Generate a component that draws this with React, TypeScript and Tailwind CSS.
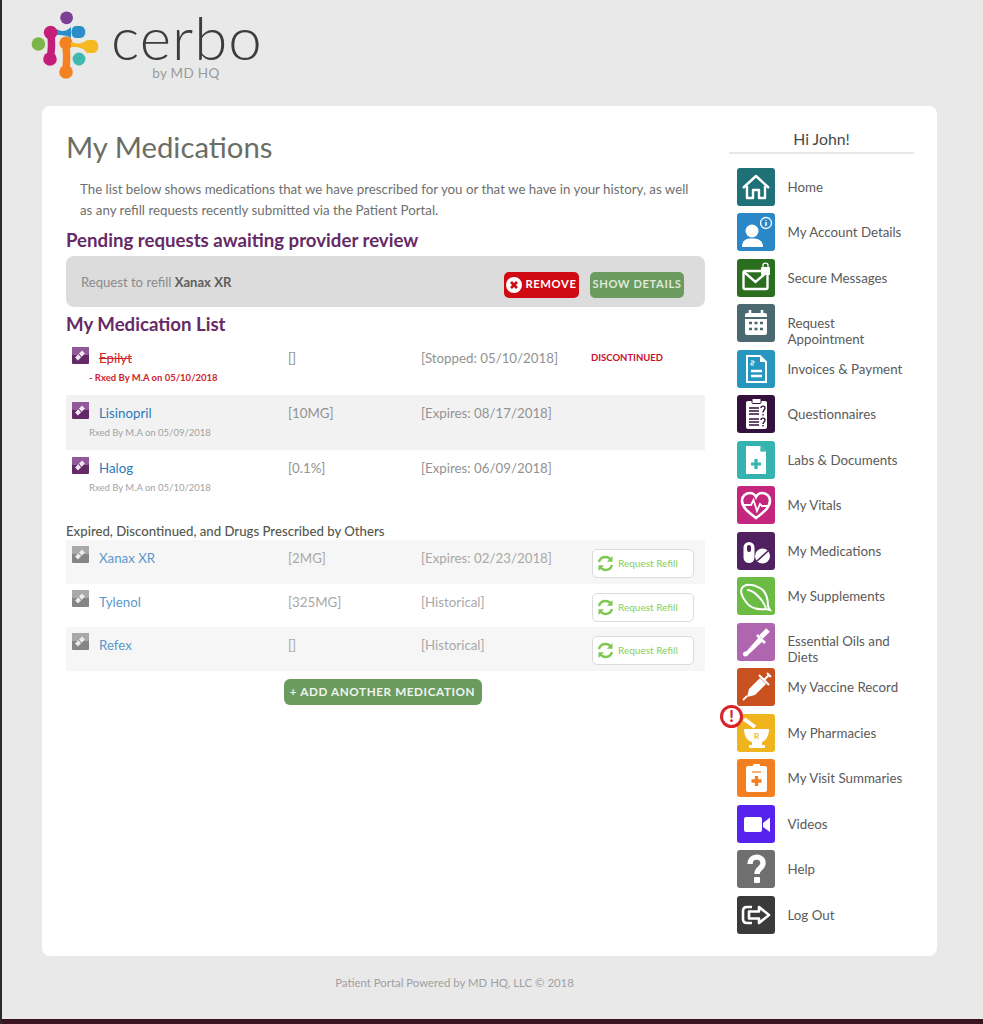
import type { FC, ReactNode } from 'react';

const lato = 'font-["Lato","Noto_Sans",sans-serif]';

const Logo: FC = () => (
  <svg width="72" height="72" viewBox="0 0 72 72" className="shrink-0">
    <circle cx="36.6" cy="8.8" r="6.4" fill="#7b3f98" />
    <circle cx="8.4" cy="35" r="6.8" fill="#7ab648" />
    <circle cx="49" cy="50" r="6.4" fill="#3fb8af" />
    <path d="M26 20 C32 23 36 23 41 18 L41 29 C36 26 32 26 26 26 Z" fill="#2a8fc9" />
    <path d="M46 17 H50 C57 17 57 29 50 29 H46 C40 29 40 17 46 17 Z" fill="#2a8fc9" />
    <path d="M20.5 24 C22 32 22 40 20 50" stroke="#c41f78" strokeWidth="7.5" fill="none" />
    <circle cx="20.6" cy="23.5" r="6.8" fill="#c41f78" />
    <circle cx="20" cy="50" r="6.8" fill="#c41f78" />
    <path d="M36 34 C37 44 37 52 36 63" stroke="#f58220" strokeWidth="7.5" fill="none" />
    <circle cx="36" cy="34" r="6.6" fill="#f58220" />
    <circle cx="36" cy="63" r="6.8" fill="#f58220" />
    <path d="M41 33 C47 35 51 35 56 32 L56 42 C51 38 47 38 41 38 Z" fill="#f5b921" />
    <path d="M58 31 H63 C70 31 70 44 63 44 H58 C53 44 53 31 58 31 Z" fill="#f5b921" />
  </svg>
);

const RxIcon: FC<{ grey?: boolean }> = ({ grey }) => (
  <svg width="17" height="17" viewBox="0 0 17 17" className="shrink-0">
    <rect width="17" height="17" rx="1" fill={grey ? '#858585' : '#642a68'} />
    <rect width="17" height="8" rx="1" fill={grey ? '#a9a9a9' : '#91589a'} />
    <path d="M4.5 12 L11.5 5" stroke="#f1e6f1" strokeWidth="4" />
    <path d="M6.5 6.5 L9.5 10.5" stroke={grey ? '#858585' : '#642a68'} strokeWidth="1" />
  </svg>
);

const RefreshIcon: FC = () => (
  <svg width="17" height="17" viewBox="0 0 17 17" fill="none" stroke="#7ec850" strokeWidth="2.4" className="shrink-0">
    <path d="M2 7 C3 3.5 6 2 8.5 2 C10.8 2 12.5 3 13.6 4.6" />
    <path d="M15.5 1 L15.5 6.8 L10 6.8" fill="#7ec850" stroke="none" />
    <path d="M15 10 C14 13.5 11 15 8.5 15 C6.2 15 4.5 14 3.4 12.4" />
    <path d="M1.5 16 L1.5 10.2 L7 10.2" fill="#7ec850" stroke="none" />
  </svg>
);

const Tile: FC<{ color: string; children: ReactNode }> = ({ color, children }) => (
  <svg width="38" height="38" viewBox="0 0 38 38" className="shrink-0">
    <rect width="38" height="38" rx="3" fill={color} />
    {children}
  </svg>
);

const menu: { label: ReactNode; color: string; icon: ReactNode; badge?: boolean }[] = [
  {
    label: 'Home',
    color: '#1f7178',
    icon: <path d="M6 20 L19 8 L32 20 M10 18 V30 H16 V22 H22 V30 H28 V18" fill="none" stroke="#fff" strokeWidth="2.4" strokeLinejoin="round" />,
  },
  {
    label: 'My Account Details',
    color: '#2a88c9',
    icon: (
      <>
        <circle cx="15" cy="18" r="6.5" fill="#fff" />
        <path d="M5 34 C5 27 9 25.5 15 25.5 C21 25.5 26 27 26 34 Z" fill="#fff" />
        <circle cx="29" cy="10" r="5.5" fill="none" stroke="#fff" strokeWidth="1.3" />
        <path d="M29 9 V13 M29 7 V7.8" stroke="#fff" strokeWidth="1.5" />
      </>
    ),
  },
  {
    label: 'Secure Messages',
    color: '#2b6e1f',
    icon: (
      <>
        <rect x="6.5" y="12" width="24" height="18" rx="1.5" fill="none" stroke="#fff" strokeWidth="2.4" />
        <path d="M7 13 L18.5 23 L30 13" fill="none" stroke="#fff" strokeWidth="2.4" />
        <rect x="24" y="8" width="9" height="8" rx="1" fill="#fff" />
        <path d="M26 8 V6 C26 3.5 31 3.5 31 6 V8" fill="none" stroke="#fff" strokeWidth="1.3" />
      </>
    ),
  },
  {
    label: (
      <>
        Request
        <br />
        Appointment
      </>
    ),
    color: '#4a6970',
    icon: (
      <>
        <rect x="8" y="9" width="22" height="22" rx="2" fill="#fff" />
        <rect x="8" y="13" width="22" height="2" fill="#4a6970" />
        <path d="M13 6 V11 M25 6 V11" stroke="#fff" strokeWidth="2.6" />
        <path d="M12 19 H15 M17.5 19 H20.5 M23 19 H26 M12 25 H15 M17.5 25 H20.5 M23 25 H26" stroke="#4a6970" strokeWidth="2.4" />
      </>
    ),
  },
  {
    label: 'Invoices & Payment',
    color: '#2797c0',
    icon: (
      <>
        <path d="M10 6 H23 L29 12 V32 H10 Z" fill="none" stroke="#fff" strokeWidth="2" />
        <path d="M23 6 V12 H29 Z" fill="#fff" />
        <path d="M14 21 H25 M14 26 H25" stroke="#fff" strokeWidth="2.4" />
        <path d="M14 11 H17 V13 H14 V15 H17" fill="none" stroke="#fff" strokeWidth="1" />
      </>
    ),
  },
  {
    label: 'Questionnaires',
    color: '#34103d',
    icon: (
      <>
        <rect x="9" y="6" width="21" height="28" rx="2" fill="#fff" />
        <rect x="15" y="3.5" width="9" height="5" rx="1" fill="#fff" stroke="#34103d" />
        <path d="M12 13 H22 M12 16 H22 M12 19 H22 M12 24 H22 M12 27 H22 M12 30 H22" stroke="#34103d" strokeWidth="1.4" />
        <path d="M24 13 C24 10.5 28 10.5 28 13 C28 15 26 15 26 17.5 M26 19 V20.5 M24 25 C24 22.5 28 22.5 28 25 C28 27 26 27 26 29 M26 30 V31.5" fill="none" stroke="#34103d" strokeWidth="1.4" />
      </>
    ),
  },
  {
    label: 'Labs & Documents',
    color: '#35b3ae',
    icon: (
      <>
        <path d="M9 5 H23 L29 11 V33 H9 Z" fill="#fff" />
        <path d="M23 5 V11 H29" fill="#35b3ae" stroke="#fff" strokeWidth="0.8" />
        <path d="M19 18 V28 M14 23 H24" stroke="#35b3ae" strokeWidth="3.2" />
      </>
    ),
  },
  {
    label: 'My Vitals',
    color: '#c4257d',
    icon: (
      <>
        <path d="M19 32 C10 25 5 21 5 14.5 C5 10 9 7 13 7 C16 7 18 9 19 11 C20 9 22 7 25 7 C29 7 33 10 33 14.5 C33 21 28 25 19 32 Z" fill="none" stroke="#fff" strokeWidth="2.6" />
        <path d="M7 19 H14 L16.5 14 L20 25 L23 18 L25 20 H31" fill="none" stroke="#fff" strokeWidth="1.8" />
      </>
    ),
  },
  {
    label: 'My Medications',
    color: '#4f2160',
    icon: (
      <>
        <rect x="6.5" y="10" width="11" height="21" rx="5.5" fill="#fff" />
        <rect x="10" y="13" width="4" height="7" rx="2" fill="#4f2160" />
        <circle cx="25.5" cy="24" r="7.5" fill="#fff" />
        <path d="M20 29 L31 19" stroke="#4f2160" strokeWidth="1.6" />
      </>
    ),
  },
  {
    label: 'My Supplements',
    color: '#6cbb45',
    icon: (
      <path d="M4.5 12 C7 6 16 7 23 11 C30 15 31 24 31 29 L33 33 L29 32 C23 33 14 32 9 25 C6 21 3 16 4.5 12 Z M10 13 C16 13 25 21 29 31" fill="none" stroke="#fff" strokeWidth="2" />
    ),
  },
  {
    label: (
      <>
        Essential Oils and
        <br />
        Diets
      </>
    ),
    color: '#b065b0',
    icon: (
      <>
        <path d="M8 30 L22 14 L26 18 L11 32 Z" fill="#fff" />
        <circle cx="8.5" cy="31" r="2.5" fill="#fff" />
        <path d="M20 12 L28 20" stroke="#fff" strokeWidth="2.6" />
        <path d="M24 14 L31 7" stroke="#fff" strokeWidth="5" />
      </>
    ),
  },
  {
    label: 'My Vaccine Record',
    color: '#c9501f',
    icon: (
      <>
        <path d="M12 21 L23 10 L29 16 L18 27 L10 29 Z" fill="#fff" />
        <path d="M10 28 L6 32" stroke="#fff" strokeWidth="1.8" />
        <path d="M22 7 L32 17 M27 12 L32 7 M30 5 L34 9" stroke="#fff" strokeWidth="2" />
      </>
    ),
  },
  {
    label: 'My Pharmacies',
    color: '#f0b41e',
    badge: true,
    icon: (
      <>
        <path d="M7 15 H32 C32 23 28 27 25 28 V31 H28 V34 H12 V31 H15 V28 C11 27 7 23 7 15 Z" fill="#fff" />
        <path d="M7 5 L18 13" stroke="#fff" strokeWidth="4" />
        <text x="17" y="25" fontSize="8" fontWeight="700" fill="#f0b41e" fontFamily="Lato">R</text>
      </>
    ),
  },
  {
    label: 'My Visit Summaries',
    color: '#f47f20',
    icon: (
      <>
        <rect x="9" y="7" width="21" height="26" rx="2" fill="#fff" />
        <rect x="16" y="5" width="7" height="4" rx="1" fill="#fff" />
        <path d="M15 13 H24" stroke="#f47f20" strokeWidth="1.2" />
        <path d="M19.5 17 V27 M14.5 22 H24.5" stroke="#f47f20" strokeWidth="3.4" />
      </>
    ),
  },
  {
    label: 'Videos',
    color: '#5522ee',
    icon: (
      <>
        <rect x="7" y="12" width="18" height="15" rx="2" fill="#fff" />
        <path d="M26 18 L33 12.5 V27 L26 22 Z" fill="#fff" />
      </>
    ),
  },
  {
    label: 'Help',
    color: '#6f6f6f',
    icon: (
      <>
        <path d="M13 14 C13 5 26 5 26 13 C26 18.5 20 18 20 24" fill="none" stroke="#fff" strokeWidth="5.4" />
        <rect x="17" y="27" width="6" height="6" rx="1" fill="#fff" />
      </>
    ),
  },
  {
    label: 'Log Out',
    color: '#3a3a3a',
    icon: (
      <>
        <path d="M15 11 H10 C7 11 6 13 6 15 V23 C6 25 7 27 10 27 H15" fill="none" stroke="#fff" strokeWidth="2.6" />
        <path d="M12 15.5 H22 V11 L32 19 L22 27 V22.5 H12 Z" fill="none" stroke="#fff" strokeWidth="2.6" strokeLinejoin="round" />
      </>
    ),
  },
];

const MedRow: FC<{
  name: string;
  dose: string;
  date: string;
  sub?: string;
  tone?: 'red';
  shaded?: boolean;
  action?: ReactNode;
}> = ({ name, dose, date, sub, tone, shaded, action }) => (
  <div className={`grid h-[55px] grid-cols-[222px_133px_170px_1fr] pt-[7px] ${shaded ? 'bg-[#f2f2f2]' : ''}`}>
    <div className="pl-[6px]">
      <div className="flex items-start gap-[10px]">
        <RxIcon />
        <span className={`mt-[2px] text-[13.3px] leading-[18px] ${tone === 'red' ? 'text-[#d0232b] line-through' : 'text-[#2b7ab8]'}`}>
          {name}
        </span>
      </div>
      <p className={`mt-[4px] pl-[17px] text-[9.5px] leading-[14px] ${tone === 'red' ? 'font-bold text-[#d0232b]' : 'text-[#a3a3a3]'}`}>
        {sub}
      </p>
    </div>
    <span className="mt-[2px] text-[13.3px] leading-[18px] text-[#929292]">{dose}</span>
    <span className="mt-[2px] text-[13.3px] leading-[18px] text-[#929292]">{date}</span>
    {action}
  </div>
);

const OldRow: FC<{ name: string; dose: string; date: string; shaded?: boolean }> = ({ name, dose, date, shaded }) => (
  <div className={`grid h-[43.5px] grid-cols-[222px_133px_170px_1fr] pt-[6px] ${shaded ? 'bg-[#f6f6f6]' : ''}`}>
    <div className="flex items-start gap-[10px] pl-[6px]">
      <RxIcon grey />
      <span className="mt-[3px] text-[13.3px] leading-[18px] text-[#5b98cc]">{name}</span>
    </div>
    <span className="mt-[3px] text-[13.3px] leading-[18px] text-[#a8a8a8]">{dose}</span>
    <span className="mt-[3px] text-[13.3px] leading-[18px] text-[#a8a8a8]">{date}</span>
    <button className="ml-[1px] mt-[3px] flex h-[29px] w-[102px] items-center gap-[4px] rounded-[5px] border border-[#dcdcdc] bg-white pl-[4px] text-[10px] text-[#86cf5f]">
      <RefreshIcon />
      Request Refill
    </button>
  </div>
);

export default function App() {
  return (
    <div className={`${lato} flex h-[1024px] flex-col border-l-2 border-[#2a2a2a] bg-[#e9e9e9]`}>
      <header className="flex h-[106px] items-start pl-[28px] pt-[9px]">
        <Logo />
        <div className="-mt-[2px] ml-[9px] flex flex-col items-center">
          <span className="text-[60px] font-light leading-[60px] tracking-[1px] text-[#3d3d3d]">cerbo</span>
          <span className="-ml-[2px] text-[13.5px] leading-[12px] tracking-[0.3px] text-[#9a9a9a]">by MD HQ</span>
        </div>
      </header>

      <main className="ml-[40px] flex h-[850px] w-[895px] rounded-[8px] bg-white pl-[24px]">
        <section className="w-[639px]">
          <h1 className="mt-[22px] text-[29.3px] leading-[38px] text-[#6b6e64]">My Medications</h1>
          <p className="mt-[13px] pl-[14px] text-[13.3px] leading-[20.5px] text-[#6f6f6f]">
            The list below shows medications that we have prescribed for you or that we have in your history, as well
            <br />
            as any refill requests recently submitted via the Patient Portal.
          </p>

          <h2 className="mt-[8px] text-[18.65px] font-bold leading-[24px] text-[#662a66]">Pending requests awaiting provider review</h2>
          <div className="mt-[4px] flex h-[51px] items-center rounded-[8px] bg-[#dcdcdc] pl-[15px] pr-[21px]">
            <p className="mt-[2px] text-[13.1px] text-[#8a8a8a]">
              Request to refill <strong className="font-bold text-[#5e5e5e]">Xanax XR</strong>
            </p>
            <button className="ml-auto mt-[6px] flex h-[26px] w-[75px] items-center justify-center gap-[3px] rounded-[5px] bg-[#cf0a12] text-[11.3px] font-bold tracking-[0.6px] text-white">
              <svg width="16" height="16" viewBox="0 0 16 16" className="shrink-0">
                <circle cx="8" cy="8" r="8" fill="#fff" />
                <path d="M5 5 L11 11 M11 5 L5 11" stroke="#cf0a12" strokeWidth="2.6" />
              </svg>
              REMOVE
            </button>
            <button className="ml-[11px] mt-[6px] h-[26px] w-[94px] rounded-[5px] bg-[#6b9b5f] text-[11.2px] font-bold tracking-[0.6px] text-[#dfe9db]">
              SHOW DETAILS
            </button>
          </div>

          <h2 className="mt-[5px] text-[18.65px] font-bold leading-[24px] text-[#662a66]">My Medication List</h2>
          <div className="mt-[4px]">
            <MedRow
              name="Epilyt"
              dose="[]"
              date="[Stopped: 05/10/2018]"
              sub="- Rxed By M.A on 05/10/2018"
              tone="red"
              action={<span className="mt-[4px] text-[9.5px] font-bold leading-[14px] text-[#c8102e]">DISCONTINUED</span>}
            />
            <MedRow name="Lisinopril" dose="[10MG]" date="[Expires: 08/17/2018]" sub="Rxed By M.A on 05/09/2018" shaded />
            <MedRow name="Halog" dose="[0.1%]" date="[Expires: 06/09/2018]" sub="Rxed By M.A on 05/10/2018" />
          </div>

          <h3 className="mt-[18px] text-[13.2px] font-medium leading-[17px] text-[#55584e]">Expired, Discontinued, and Drugs Prescribed by Others</h3>
          <div>
            <OldRow name="Xanax XR" dose="[2MG]" date="[Expires: 02/23/2018]" shaded />
            <OldRow name="Tylenol" dose="[325MG]" date="[Historical]" />
            <OldRow name="Refex" dose="[]" date="[Historical]" shaded />
          </div>
          <div className="mt-[8.5px] flex justify-center pr-[6px]">
            <button className="h-[26px] w-[198px] rounded-[6px] bg-[#6b9b5f] text-[11.7px] font-bold tracking-[0.6px] text-[#f0f5ee]">
              + ADD ANOTHER MEDICATION
            </button>
          </div>
        </section>

        <aside className="ml-[24px] w-[185px]">
          <div className="mt-[23px] h-[25px] border-b-2 border-[#e8e8e8] text-center text-[15.8px] leading-[20px] text-[#4a4a4a]">Hi John!</div>
          <ul className="mt-[14px] flex flex-col gap-[7.47px] pl-[8px]">
            {menu.map((item, i) => (
              <li key={i} className="relative flex h-[38px] items-center gap-[12.5px]">
                <Tile color={item.color}>{item.icon}</Tile>
                <span className={`text-[13.3px] leading-[16px] text-[#5a5a5a] ${typeof item.label !== 'string' ? 'mt-[15px]' : ''}`}>{item.label}</span>
                {item.badge && (
                  <span className="absolute -left-[17px] -top-[9px] flex h-[23px] w-[23px] items-center justify-center rounded-full border-[3px] border-[#d8232a] bg-white text-[16px] font-black leading-none text-[#d8232a]">
                    !
                  </span>
                )}
              </li>
            ))}
          </ul>
        </aside>
      </main>

      <footer className="mt-[19px] pr-[76px] text-center text-[11.4px] leading-[16px] text-[#a0a0a0]">Patient Portal Powered by MD HQ, LLC © 2018</footer>
      <div className="mt-auto h-[5px] bg-[#3a1420]" />
    </div>
  );
}
